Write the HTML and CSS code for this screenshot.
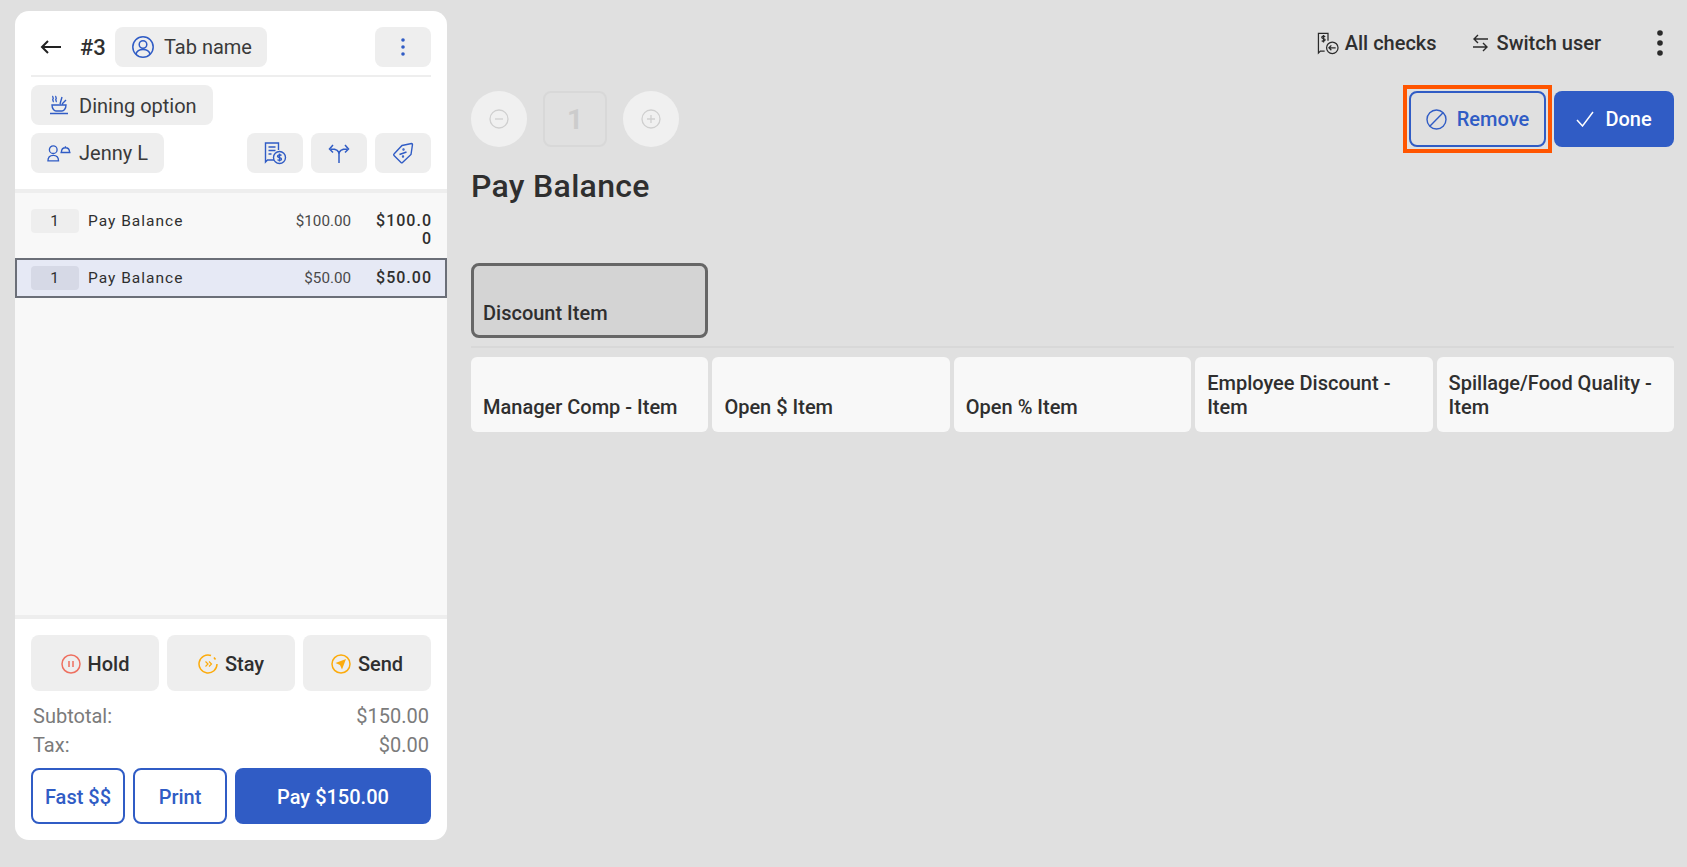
FILE: index.html
```html
<!DOCTYPE html>
<html lang="en">
<head>
  <meta charset="UTF-8">
  <meta name="viewport" content="width=device-width, initial-scale=1.0">
  <title>Pay Balance</title>
  <link rel="stylesheet" href="styles.css">
</head>
<body>
  <div class="page">
    <!-- check panel -->
    <aside class="check">
      <div class="check-head">
        <div class="head-row">
          <svg class="back" width="22" height="16" viewBox="0 0 22 16" fill="none" stroke="#222" stroke-width="2"><path d="M21 8H2M8 2 2 8l6 6"/></svg>
          <span class="check-no">#3</span>
          <button class="chip tab-chip">
            <svg width="24" height="24" viewBox="0 0 24 24" fill="none" stroke="#305cc5" stroke-width="1.5"><circle cx="12" cy="12" r="10.2"/><circle cx="12" cy="9.5" r="3.8"/><path d="M5 19c1-3.5 3.5-4.5 7-4.5s6 1 7 4.5"/></svg>
            Tab name
          </button>
          <button class="chip square push">
            <svg width="4" height="18" viewBox="0 0 4 18" fill="#305cc5"><circle cx="2" cy="2" r="1.8"/><circle cx="2" cy="9" r="1.8"/><circle cx="2" cy="16" r="1.8"/></svg>
          </button>
        </div>
        <div class="head-line"></div>
        <div class="head-row">
          <button class="chip dining-chip">
            <svg width="20" height="20" viewBox="0 0 20 20" fill="none" stroke="#305cc5" stroke-width="1.4"><path d="M1 18.5h18M3 10h14c0 4-2.5 6-4 6H7c-1.5 0-4-2-4-6ZM4 1c-1 1 1 2 0 3s1 2 0 3M7 1c-1 1 1 2 0 3s1 2 0 3M11 9 13 2M13 9l4-4"/></svg>
            <span class="dining-text">Dining option</span>
          </button>
        </div>
        <div class="head-row gap-row">
          <button class="chip server-chip">
            <svg width="24" height="18" viewBox="0 0 25 18" fill="none" stroke="#305cc5" stroke-width="1.4"><circle cx="6.5" cy="5.5" r="4"/><path d="M1 17.2c0-4 2.5-5.7 5.5-5.7s5.5 1.7 5.5 5.7ZM14 8.5h10.500M15 8.500c0-3.500 2-5 4.200-5s4.300 1.500 4.300 5M19.200 3.500V2"/></svg>
            Jenny L
          </button>
          <button class="chip square push">
            <svg width="24" height="24" viewBox="0 0 24 24" fill="none" stroke="#305cc5" stroke-width="1.4"><path d="M11 19H4.500L2.500 21V2h13v7M5.500 6h7M5.500 9.500h7M5.500 13h3"/><circle cx="16.500" cy="16.500" r="6"/><path d="M18.500 14.500c-1-1-4-1-4 .8s4 1 4 2.700-3 1.700-4 .6M16.500 12.500v8"/></svg>
          </button>
          <button class="chip square">
            <svg width="22" height="22" viewBox="0 0 22 22" fill="none" stroke="#305cc5" stroke-width="1.5"><path d="M11 21v-9M11 12C11 8 7 7 3 7M11 12c0-4 4-5 8-5M5 3 1.500 7 5 10.500M17 3l3.500 4L17 10.500"/></svg>
          </button>
          <button class="chip square">
            <svg width="24" height="24" viewBox="0 0 24 24" fill="none" stroke="#305cc5" stroke-width="1.4"><path d="M11 4.500 20.500 2.500c.5 0 1 .5 1 1L20 13.500 11.500 21.500c-.5.5-1 .5-1.500 0L3 14.500c-.5-.5-.5-1 0-1.500Z"/><path d="M8.500 13.500l7-2.500"/><circle cx="12.500" cy="8.500" r=".5"/><circle cx="12" cy="15.500" r=".5"/></svg>
          </button>
        </div>
      </div>

      <div class="lines">
        <div class="line">
          <span class="qty">1</span>
          <span class="line-name">Pay Balance</span>
          <span class="line-price">$100.00</span>
          <span class="line-total">$100.00</span>
        </div>
        <div class="line selected">
          <span class="qty">1</span>
          <span class="line-name">Pay Balance</span>
          <span class="line-price">$50.00</span>
          <span class="line-total">$50.00</span>
        </div>
      </div>

      <div class="check-foot">
        <div class="send-row">
          <button class="send-btn">
            <svg width="20" height="20" viewBox="0 0 20 20" fill="none" stroke="#ee6f5f" stroke-width="1.5"><circle cx="10" cy="10" r="9"/><path d="M8 7v6M12 7v6"/></svg>
            Hold
          </button>
          <button class="send-btn">
            <svg width="20" height="20" viewBox="0 0 20 20" fill="none" stroke="#fcab0c" stroke-width="1.5"><path d="M13 1.500A9 9 0 1 0 19 10"/><path d="M16 3.500l1.500 2"/><path d="M7.500 7.500 10 10l-2.500 2.500M11 7.500l2.500 2.500L11 12.500" stroke-width="1.2"/></svg>
            Stay
          </button>
          <button class="send-btn">
            <svg width="20" height="20" viewBox="0 0 20 20" fill="none" stroke="#fcab0c" stroke-width="1.5"><circle cx="10" cy="10" r="9"/><path d="M15 5 4.500 9 9 11l2 4.500Z" fill="#fcab0c" stroke="none"/></svg>
            Send
          </button>
        </div>
        <div class="totals">
          <div class="total-row"><span>Subtotal:</span><span>$150.00</span></div>
          <div class="total-row"><span>Tax:</span><span>$0.00</span></div>
        </div>
        <div class="pay-row">
          <button class="outline-btn">Fast $$</button>
          <button class="outline-btn">Print</button>
          <button class="pay-btn">Pay $150.00</button>
        </div>
      </div>
    </aside>

    <main class="main">
      <div class="toolbar">
        <div class="tool tool-checks">
          <svg width="22" height="23" viewBox="0 0 23 24" fill="none" stroke="#2b2b2b" stroke-width="1.3"><path d="M8 20H3.500L1.500 22V1.500h10V9"/><path d="M8.500 5c-.7-1-3.500-1-3.500.6s3.500.9 3.500 2.600-2.800 1.700-3.500.7M6.800 3v8"/><circle cx="16" cy="16.500" r="6"/><path d="M19.500 16.500h-7M15 14l-2.500 2.500L15 19"/></svg>
          All checks
        </div>
        <div class="tool tool-switch">
          <svg width="17" height="18" viewBox="0 0 17 18" fill="none" stroke="#2b2b2b" stroke-width="1.4"><path d="M16 5H2M6 1 2 5l4 4M1 13h14M11 9l4 4-4 4"/></svg>
          Switch user
        </div>
        <button class="kebab">
          <svg width="6" height="26" viewBox="0 0 6 26" fill="#2b2b2b"><circle cx="3" cy="3" r="2.8"/><circle cx="3" cy="13" r="2.8"/><circle cx="3" cy="23" r="2.8"/></svg>
        </button>
      </div>

      <div class="action-row">
        <div class="stepper">
          <button class="step-btn">
            <svg width="20" height="20" viewBox="0 0 20 20" fill="none" stroke="#cfcfcf" stroke-width="1.3"><circle cx="10" cy="10" r="9"/><path d="M6 10h8"/></svg>
          </button>
          <div class="step-qty">1</div>
          <button class="step-btn">
            <svg width="20" height="20" viewBox="0 0 20 20" fill="none" stroke="#cfcfcf" stroke-width="1.3"><circle cx="10" cy="10" r="9"/><path d="M6 10h8M10 6v8"/></svg>
          </button>
        </div>
        <div class="action-btns">
          <button class="remove-btn">
            <svg width="21" height="21" viewBox="0 0 21 21" fill="none" stroke="#305cc5" stroke-width="1.4"><circle cx="10.500" cy="10.500" r="9.500"/><path d="M17 3.700 3.800 17.200"/></svg>
            Remove
          </button>
          <button class="done-btn">
            <svg width="18" height="16" viewBox="0 0 18 16" fill="none" stroke="#fff" stroke-width="1.5"><path d="M1 9l5.500 6L17 1"/></svg>
            Done
          </button>
        </div>
      </div>

      <h1 class="title">Pay Balance</h1>

      <div class="tiles">
        <button class="tile tile-on">Discount Item</button>
      </div>
      <div class="tile-line"></div>
      <div class="tiles">
        <button class="tile">Manager Comp - Item</button>
        <button class="tile">Open $ Item</button>
        <button class="tile">Open % Item</button>
        <button class="tile">Employee Discount - Item</button>
        <button class="tile">Spillage/Food Quality - Item</button>
      </div>
    </main>
  </div>
</body>
</html>
```

FILE: styles.css
```css
* {
  box-sizing: border-box;
}

body {
  margin: 0;
  background-color: #e0e0e0;
  color: #2f2f2f;
  font-family: Roboto, "Liberation Sans", sans-serif;
  font-size: 20px;
}

button {
  border: none;
  padding: 0;
  font-family: inherit;
  font-size: 20px;
  color: inherit;
}

.page {
  display: flex;
  height: 867px;
  overflow: hidden;
}

/* left panel */
.check {
  display: flex;
  flex-direction: column;
  flex: none;
  width: 432px;
  margin: 11px 0 27px 15px;
  border-radius: 14px;
  overflow: hidden;
  background-color: #fff;
}

.check-head {
  padding: 16px 16px 16px;
  border-bottom: 4px solid #eee;
}

.head-row {
  display: flex;
  align-items: center;
  gap: 8px;
}

.gap-row {
  margin-top: 8px;
}

.back {
  margin-left: 9px;
}

.check-no {
  width: 26px;
  margin-left: 10px;
  margin-right: 1px;
  font-size: 22px;
  font-weight: 500;
}

.head-line {
  height: 2px;
  margin: 8px 0;
  background-color: #eee;
}

.chip {
  display: flex;
  align-items: center;
  height: 40px;
  border-radius: 8px;
  background-color: #eee;
  color: #3a3a3a;
}

.tab-chip {
  gap: 9px;
  width: 152px;
  padding-left: 16px;
}

.dining-chip {
  gap: 10px;
  width: 182px;
  padding-left: 18px;
}

.dining-text {
  padding-top: 1px;
}

.server-chip {
  gap: 8px;
  width: 133px;
  padding-left: 16px;
}

.square {
  justify-content: center;
  width: 56px;
}

.push {
  margin-left: auto;
}

/* order lines */
.lines {
  flex: 1;
  padding-top: 8px;
  background-color: #f8f8f8;
}

.line {
  display: flex;
  align-items: flex-start;
  padding: 6px 14px;
  border: 2px solid transparent;
  font-size: 15.5px;
  line-height: 19px;
  letter-spacing: 1px;
}

.line.selected {
  border-color: #6b6f78;
  background-color: #e6e9f5;
}

.qty {
  flex: none;
  width: 48px;
  height: 24px;
  margin-right: 9px;
  border-radius: 4px;
  background-color: #eee;
  line-height: 24px;
  text-align: center;
}

.selected .qty {
  background-color: #d6d9e6;
}

.line-name {
  flex: 1;
  padding-top: 3px;
}

.line-price {
  padding-top: 3px;
  color: #4a4a4a;
  font-size: 15.2px;
  letter-spacing: 0;
}

.line-total {
  flex: none;
  width: 57px;
  margin-left: 24px;
  margin-right: -1px;
  padding: 3px 0 2px;
  font-size: 16px;
  font-weight: 500;
  line-height: 18px;
  text-align: right;
  word-break: break-all;
}

/* left panel bottom */
.check-foot {
  padding: 16px;
  border-top: 4px solid #eee;
}

.send-row {
  display: grid;
  grid-template-columns: repeat(3, 1fr);
  gap: 8px;
}

.send-btn {
  display: flex;
  align-items: center;
  justify-content: center;
  gap: 7px;
  height: 56px;
  padding-top: 1px;
  border-radius: 8px;
  background-color: #eee;
  font-weight: 500;
}

.totals {
  margin: 11px 0 8px;
  padding: 0 2px;
  color: #7b7b7b;
}

.total-row {
  display: flex;
  justify-content: space-between;
  line-height: 29px;
}

.pay-row {
  display: flex;
  gap: 8px;
}

.outline-btn {
  width: 94px;
  height: 56px;
  padding-top: 1px;
  border: 2px solid #305cc5;
  border-radius: 8px;
  background-color: #fff;
  color: #305cc5;
  font-weight: 500;
}

.pay-btn {
  flex: 1;
  height: 56px;
  padding-top: 1px;
  border-radius: 8px;
  background-color: #305cc5;
  color: #fff;
  font-weight: 500;
}

/* right side */
.main {
  flex: 1;
  padding: 23px 13px 0 24px;
}

.toolbar {
  display: flex;
  align-items: center;
  justify-content: flex-end;
  height: 40px;
}

.tool {
  display: flex;
  align-items: center;
  font-weight: 500;
}

.tool-checks {
  gap: 6px;
}

.tool-switch {
  gap: 8px;
  margin-left: 35px;
}

.kebab {
  display: flex;
  justify-content: center;
  width: 28px;
  margin-left: 45px;
  background: none;
}

.action-row {
  display: flex;
  justify-content: space-between;
  margin-top: 28px;
}

.stepper {
  display: flex;
  gap: 16px;
}

.step-btn {
  display: flex;
  align-items: center;
  justify-content: center;
  width: 56px;
  height: 56px;
  border-radius: 50%;
  background-color: #f0f0f0;
}

.step-qty {
  width: 64px;
  height: 56px;
  border: 2px solid #d8d8d8;
  border-radius: 8px;
  color: #ccc;
  font-size: 28px;
  font-weight: 700;
  line-height: 54px;
  text-align: center;
}

.action-btns {
  display: flex;
  gap: 8px;
}

.remove-btn {
  position: relative;
  display: flex;
  align-items: center;
  justify-content: center;
  gap: 10px;
  width: 137px;
  height: 56px;
  border: 2px solid #305cc5;
  border-radius: 8px;
  background: none;
  color: #305cc5;
  font-weight: 500;
}

/* orange highlight box around the button */
.remove-btn::after {
  content: "";
  position: absolute;
  inset: -8px;
  border: 4px solid #f50;
}

.done-btn {
  display: flex;
  align-items: center;
  justify-content: center;
  gap: 11px;
  width: 120px;
  height: 56px;
  border-radius: 8px;
  background-color: #305cc5;
  color: #fff;
  font-weight: 500;
}

.title {
  height: 40px;
  margin: 19px 0 57px;
  font-size: 32px;
  font-weight: 500;
  line-height: 40px;
  letter-spacing: .3px;
}

.tiles {
  display: grid;
  grid-template-columns: repeat(5, 1fr);
  gap: 4px;
}

.tile {
  display: flex;
  align-items: flex-end;
  height: 75px;
  padding: 0 12px 13px;
  border-radius: 6px;
  background-color: #f8f8f8;
  font-weight: 500;
  line-height: 24px;
  text-align: left;
}

.tile-on {
  padding: 0 9px 10px;
  border: 3px solid #666;
  border-radius: 8px;
  background-color: #d4d4d4;
}

.tile-line {
  height: 2px;
  margin: 8px 0 9px;
  background-color: #d8d8d8;
}
```
